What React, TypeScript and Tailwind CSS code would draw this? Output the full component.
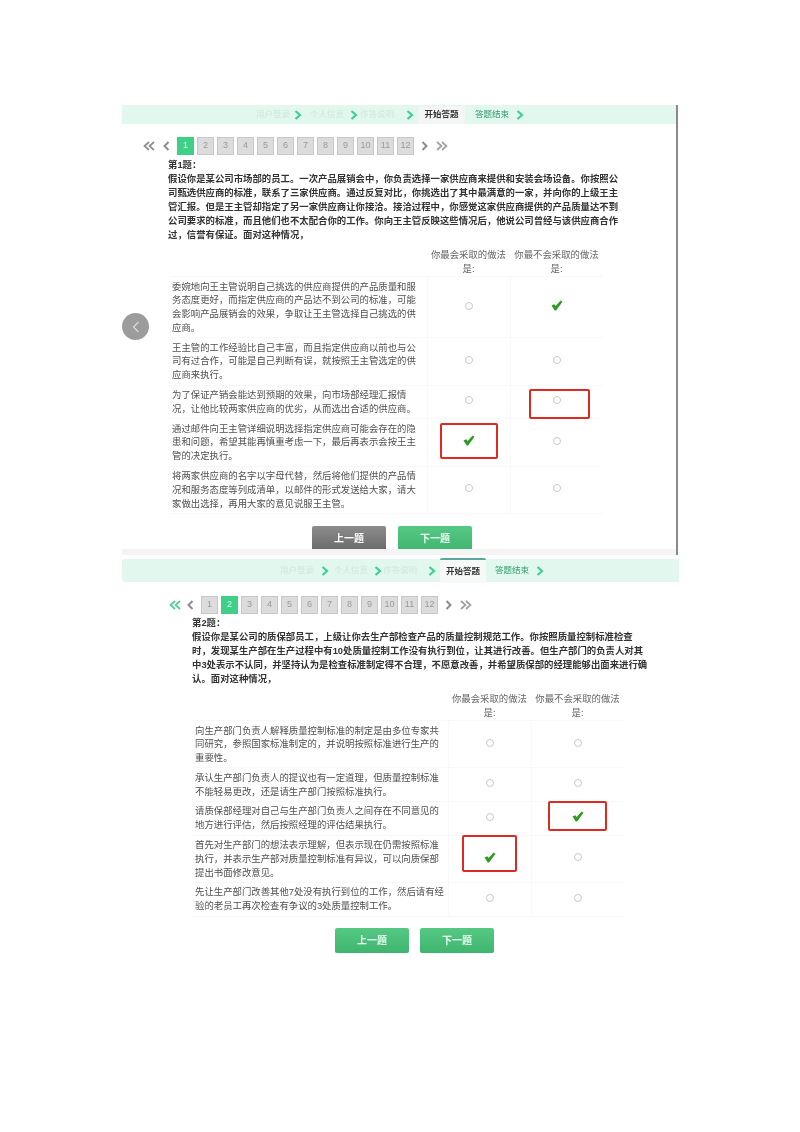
import React from "react";

const FONT = "font-['Liberation_Sans','Noto_Sans_CJK_SC',sans-serif]";

function Chev({ className }: { className: string }) {
  return (
    <svg width="8" height="10" viewBox="0 0 8 10" className={className} fill="none" stroke="currentColor" strokeWidth="2.2">
      <path d="M1.5 1 L6 5 L1.5 9" />
    </svg>
  );
}

function Dbl({ left, className }: { left?: boolean; className: string }) {
  return (
    <svg width="12" height="10" viewBox="0 0 12 10" className={className} fill="none" stroke="currentColor" strokeWidth="1.7">
      {left ? <path d="M6 1 L1.5 5 L6 9 M11 1 L6.5 5 L11 9" /> : <path d="M1 1 L5.5 5 L1 9 M6 1 L10.5 5 L6 9" />}
    </svg>
  );
}

function Single({ left }: { left?: boolean }) {
  return (
    <svg width="7" height="10" viewBox="0 0 7 10" className="text-[#8d8d8d]" fill="none" stroke="currentColor" strokeWidth="2">
      {left ? <path d="M5.5 1 L1.5 5 L5.5 9" /> : <path d="M1.5 1 L5.5 5 L1.5 9" />}
    </svg>
  );
}

function Check() {
  return (
    <svg width="12" height="11" viewBox="0 0 13 12" className="text-[#2f9a22]" fill="currentColor">
      <path d="M0.5 6 L3.5 4.5 L5 6.5 L10.5 0.5 L12.5 2 L5.5 11.5 L4 11.5 Z" />
    </svg>
  );
}

function Radio() {
  return <span className="block w-[8px] h-[8px] rounded-full border border-[#c9c9c9] bg-white" />;
}

function Pager({ active }: { active: number }) {
  return (
    <div className="flex items-center h-[18px]">
      <Dbl left className={active === 2 ? "text-[#4fcf94]" : "text-[#8d8d8d]"} />
      <span className={active === 2 ? "w-[6px]" : "w-[8px]"} />
      <Single left />
      <span className="w-[7px]" />
      <div className="flex gap-[3px]">
        {Array.from({ length: 12 }, (_, i) => i + 1).map((n) => (
          <span
            key={n}
            className={
              n === active
                ? "w-[17px] h-[18px] flex items-center justify-center text-[9px] text-[#d9f7e8] bg-[#3fd088]"
                : "w-[17px] h-[18px] flex items-center justify-center text-[9px] text-[#9a9a9a] bg-[#dcdcdc] border border-[#c8c8c8]"
            }
          >
            {n}
          </span>
        ))}
      </div>
      <span className="w-[7px]" />
      <Single />
      <span className="w-[8px]" />
      <Dbl className="text-[#a0a0a0]" />
    </div>
  );
}

function Question({ lines }: { lines: string[] }) {
  return (
    <div className="text-[9.4px] leading-[14px] font-bold text-[#333]">
      {lines.map((l, i) => (
        <div key={i} className="whitespace-nowrap">
          {l}
        </div>
      ))}
    </div>
  );
}

type Mark = "radio" | "check";

function Cell({ mark, box, wide }: { mark: Mark; box?: string; wide?: boolean }) {
  return (
    <div className={wide ? "relative w-[93px] flex items-center justify-center pb-[3px] border-l border-[#f6f9f8]" : "relative w-[83px] flex items-center justify-center pb-[3px] border-l border-[#f6f9f8]"}>
      {mark === "check" ? <Check /> : <Radio />}
      {box ? <span className={box} /> : null}
    </div>
  );
}

type Row = { lines: string[]; a: Mark; b: Mark; boxA?: string; boxB?: string };

function Table({ rows, textClass }: { rows: Row[]; textClass: string }) {
  return (
    <div className="w-[433px] border-b border-[#f6f9f8]">
      {rows.map((r, i) => (
        <div key={i} className="flex border-t border-[#f6f9f8]">
          <div className={textClass}>
            {r.lines.map((l, j) => (
              <div key={j} className="whitespace-nowrap">
                {l}
              </div>
            ))}
          </div>
          <Cell mark={r.a} box={r.boxA} />
          <Cell mark={r.b} box={r.boxB} wide />
        </div>
      ))}
    </div>
  );
}

function Header() {
  return (
    <div className="flex text-[9.4px] leading-[14px] text-[#666]">
      <div className="w-[257px]" />
      <div className="w-[83px] text-center whitespace-nowrap">
        你最会采取的做法
        <br />
        是:
      </div>
      <div className="w-[93px] text-center whitespace-nowrap">
        你最不会采取的做法
        <br />
        是:
      </div>
    </div>
  );
}

const q1 = [
  "第1题：",
  "假设你是某公司市场部的员工。一次产品展销会中，你负责选择一家供应商来提供和安装会场设备。你按照公",
  "司甄选供应商的标准，联系了三家供应商。通过反复对比，你挑选出了其中最满意的一家，并向你的上级王主",
  "管汇报。但是王主管却指定了另一家供应商让你接洽。接洽过程中，你感觉这家供应商提供的产品质量达不到",
  "公司要求的标准，而且他们也不太配合你的工作。你向王主管反映这些情况后，他说公司曾经与该供应商合作",
  "过，信誉有保证。面对这种情况，",
];

const q2 = [
  "第2题：",
  "假设你是某公司的质保部员工，上级让你去生产部检查产品的质量控制规范工作。你按照质量控制标准检查",
  "时，发现某生产部在生产过程中有10处质量控制工作没有执行到位，让其进行改善。但生产部门的负责人对其",
  "中3处表示不认同，并坚持认为是检查标准制定得不合理，不愿意改善，并希望质保部的经理能够出面来进行确",
  "认。面对这种情况，",
];

const rows1: Row[] = [
  {
    lines: ["委婉地向王主管说明自己挑选的供应商提供的产品质量和服", "务态度更好，而指定供应商的产品达不到公司的标准，可能", "会影响产品展销会的效果，争取让王主管选择自己挑选的供", "应商。"],
    a: "radio",
    b: "check",
  },
  {
    lines: ["王主管的工作经验比自己丰富，而且指定供应商以前也与公", "司有过合作，可能是自己判断有误，就按照王主管选定的供", "应商来执行。"],
    a: "radio",
    b: "radio",
  },
  {
    lines: ["为了保证产销会能达到预期的效果，向市场部经理汇报情", "况，让他比较两家供应商的优劣，从而选出合适的供应商。"],
    a: "radio",
    b: "radio",
    boxB: "absolute left-[18px] top-[3px] w-[61px] h-[30px] border-[2px] border-[#e02a20] rounded-[2px]",
  },
  {
    lines: ["通过邮件向王主管详细说明选择指定供应商可能会存在的隐", "患和问题，希望其能再慎重考虑一下，最后再表示会按王主", "管的决定执行。"],
    a: "check",
    b: "radio",
    boxA: "absolute left-[12px] top-[4px] w-[58px] h-[36px] border-[2px] border-[#e02a20] rounded-[2px]",
  },
  {
    lines: ["将两家供应商的名字以字母代替，然后将他们提供的产品情", "况和服务态度等列成清单，以邮件的形式发送给大家，请大", "家做出选择，再用大家的意见说服王主管。"],
    a: "radio",
    b: "radio",
  },
];

const rows2: Row[] = [
  {
    lines: ["向生产部门负责人解释质量控制标准的制定是由多位专家共", "同研究，参照国家标准制定的，并说明按照标准进行生产的", "重要性。"],
    a: "radio",
    b: "radio",
  },
  {
    lines: ["承认生产部门负责人的提议也有一定道理，但质量控制标准", "不能轻易更改，还是请生产部门按照标准执行。"],
    a: "radio",
    b: "radio",
  },
  {
    lines: ["请质保部经理对自己与生产部门负责人之间存在不同意见的", "地方进行评估，然后按照经理的评估结果执行。"],
    a: "radio",
    b: "check",
    boxB: "absolute left-[16px] top-[-1px] w-[59px] h-[30px] border-[2px] border-[#e02a20] rounded-[2px]",
  },
  {
    lines: ["首先对生产部门的想法表示理解，但表示现在仍需按照标准", "执行，并表示生产部对质量控制标准有异议，可以向质保部", "提出书面修改意见。"],
    a: "check",
    b: "radio",
    boxA: "absolute left-[13px] top-[-1px] w-[55px] h-[37px] border-[2px] border-[#e02a20] rounded-[2px]",
  },
  {
    lines: ["先让生产部门改善其他7处没有执行到位的工作，然后请有经", "验的老员工再次检查有争议的3处质量控制工作。"],
    a: "radio",
    b: "radio",
  },
];

function Btn({ label, grey }: { label: string; grey?: boolean }) {
  return (
    <span
      className={
        grey
          ? "w-[74px] h-[25px] flex items-center justify-center rounded-[2px] text-[10px] font-bold text-white bg-gradient-to-b from-[#8c8c8c] to-[#6a6a6a]"
          : "w-[74px] h-[25px] flex items-center justify-center rounded-[2px] text-[10px] font-bold text-[#eafff2] bg-gradient-to-b from-[#55c983] to-[#3fb56f]"
      }
    >
      {label}
    </span>
  );
}

export default function App() {
  return (
    <div className={`w-[800px] h-[1132px] bg-white pt-[105px] overflow-hidden blur-[0.5px] ${FONT}`}>
      {/* first screen */}
      <div className="relative ml-[122px] w-[556px] border-r-2 border-[#8a8a8a]">
        <div className="h-[444px] overflow-hidden">
          <div className="h-[19px] bg-[#e2f8ee] flex items-center text-[8.5px]">
            <span className="ml-[134px] text-[#cfe6db] whitespace-nowrap">用户登录</span>
            <Chev className="ml-[4px] text-[#3fcf98]" />
            <span className="ml-[8px] text-[#cfe6db] whitespace-nowrap">个人信息</span>
            <Chev className="ml-[6px] text-[#3fcf98]" />
            <span className="ml-[2px] text-[#cfe6db] whitespace-nowrap">作答说明</span>
            <Chev className="ml-[12px] text-[#3fcf98]" />
            <span className="ml-[4px] w-[47px] h-[18px] flex items-center justify-center font-bold text-[#333] bg-[#f4f6f5] rounded-[2px] whitespace-nowrap">开始答题</span>
            <span className="ml-[10px] text-[#2f9c6a] whitespace-nowrap">答题结束</span>
            <Chev className="ml-[7px] text-[#3fcf98]" />
          </div>
          <div className="ml-[21px] mt-[13px]">
            <Pager active={1} />
          </div>
          <div className="ml-[46px] mt-[3px]">
            <Question lines={q1} />
          </div>
          <div className="ml-[48px] mt-[6px]">
            <Header />
            <Table rows={rows1} textClass="w-[257px] pl-[2px] py-[2.5px] text-[9.4px] leading-[13.8px] text-[#4f4f4f]" />
          </div>
          <div className="flex gap-[12px] ml-[190px] mt-[12px]">
            <Btn label="上一题" grey />
            <Btn label="下一题" />
          </div>
        </div>
        <div className="h-[6px] bg-[#f4f4f4]" />
        <span className="absolute left-0 top-[208px] w-[27px] h-[27px] rounded-full bg-[#9c9c9c] flex items-center justify-center">
          <svg width="8" height="12" viewBox="0 0 8 12" fill="none" stroke="#d8d8d8" strokeWidth="1.3">
            <path d="M6.5 1 L1.5 6 L6.5 11" />
          </svg>
        </span>
      </div>

      {/* second screen */}
      <div className="ml-[122px] mt-[4px] w-[557px]">
        <div className="h-[23px] bg-[#e2f8ee] rounded-l-[3px] flex items-center text-[8.5px]">
          <span className="ml-[158px] text-[#cfe6db] whitespace-nowrap">用户登录</span>
          <Chev className="ml-[7px] text-[#3fcf98]" />
          <span className="ml-[5px] text-[#cfe6db] whitespace-nowrap">个人信息</span>
          <Chev className="ml-[6px] text-[#3fcf98]" />
          <span className="ml-[1px] text-[#cfe6db] whitespace-nowrap">作答说明</span>
          <Chev className="ml-[11px] text-[#3fcf98]" />
          <span className="ml-[4px] w-[46px] h-[25px] flex items-center justify-center font-bold text-[#333] bg-[#f7f8f8] border-t-2 border-[#5aa7a0] rounded-[2px] whitespace-nowrap">开始答题</span>
          <span className="ml-[9px] text-[#2f9c6a] whitespace-nowrap">答题结束</span>
          <Chev className="ml-[7px] text-[#3fcf98]" />
        </div>
        <div className="ml-[47px] mt-[14px]">
          <Pager active={2} />
        </div>
        <div className="ml-[70px] mt-[2px]">
          <Question lines={q2} />
        </div>
        <div className="ml-[69px] mt-[6px]">
          <Header />
          <Table rows={rows2} textClass="w-[257px] pl-[4px] py-[2.5px] text-[9.4px] leading-[13.8px] text-[#4f4f4f]" />
        </div>
        <div className="flex gap-[11px] ml-[213px] mt-[11px]">
          <Btn label="上一题" />
          <Btn label="下一题" />
        </div>
      </div>
    </div>
  );
}
